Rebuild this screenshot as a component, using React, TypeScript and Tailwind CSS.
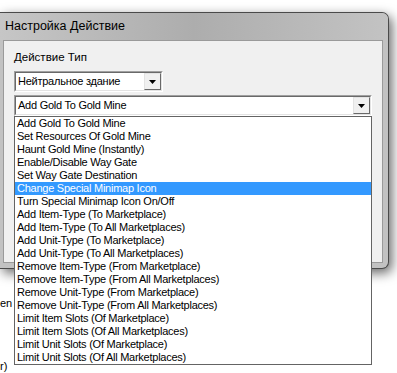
import React from "react";

const actions = [
  "Add Gold To Gold Mine",
  "Set Resources Of Gold Mine",
  "Haunt Gold Mine (Instantly)",
  "Enable/Disable Way Gate",
  "Set Way Gate Destination",
  "Change Special Minimap Icon",
  "Turn Special Minimap Icon On/Off",
  "Add Item-Type (To Marketplace)",
  "Add Item-Type (To All Marketplaces)",
  "Add Unit-Type (To Marketplace)",
  "Add Unit-Type (To All Marketplaces)",
  "Remove Item-Type (From Marketplace)",
  "Remove Item-Type (From All Marketplaces)",
  "Remove Unit-Type (From Marketplace)",
  "Remove Unit-Type (From All Marketplaces)",
  "Limit Item Slots (Of Marketplace)",
  "Limit Item Slots (Of All Marketplaces)",
  "Limit Unit Slots (Of Marketplace)",
  "Limit Unit Slots (Of All Marketplaces)",
];

const selected = "Change Special Minimap Icon";

// classic sunken combo box with the little raised arrow button
const Combo = ({ value, width }: { value: string; width: string }) => (
  <div
    className={`${width} h-[21px] border-t border-l border-[#a0a0a0] border-b border-r border-b-white border-r-white`}
  >
    <div className="flex h-full items-center border-t border-l border-[#696969] border-b border-r border-b-[#e3e3e3] border-r-[#e3e3e3] bg-white">
      <span className="flex-1 truncate pl-[2px] text-[11px] leading-[13px] tracking-[-0.25px] text-black">
        {value}
      </span>
      <div className="flex h-[17px] w-[17px] items-center justify-center border-t border-l border-[#e3e3e3] border-b border-r border-b-[#696969] border-r-[#696969] bg-[#f0f0f0]">
        <svg width="7" height="4" viewBox="0 0 7 4">
          <path d="M0 0h7L3.5 4z" fill="#000" />
        </svg>
      </div>
    </div>
  </div>
);

export default function App() {
  return (
    <div
      className="relative h-[373px] w-[397px] overflow-hidden bg-white"
      style={{ fontFamily: '"Liberation Sans", Arial, sans-serif' }}
    >
      <div className="pt-[12px]">
        {/* dialog window */}
        <div className="h-[257px] w-[389px] rounded-tr-[7px] rounded-br-[7px] border-t border-r border-b border-[#4a4a4a] bg-[#c2c2c2] shadow-[3px_4px_12px_rgba(0,0,0,0.6)]">
          <div className="flex h-[27px] items-center rounded-tr-[6px] bg-gradient-to-r from-[#c6c6c6] via-[#adadad] to-[#c3c3c3] pl-[5px] text-[12.5px] text-black">
            Настройка Действие
          </div>
          <div className="ml-[3px] mr-[5px] h-[223px] border border-[#9a9a9a] bg-[#f0f0f0] pl-[10px] pt-[10px]">
            <div className="text-[11.5px] leading-[13px] text-black">
              Действие Тип
            </div>
            <div className="mt-[7px]">
              <Combo value="Нейтральное здание" width="w-[149px]" />
            </div>
            <div className="relative mt-[3px] w-[358px]">
              <Combo value="Add Gold To Gold Mine" width="w-[358px]" />
              {/* open drop-down list */}
              <div className="absolute left-0 top-full z-10 w-[358px] border border-[#646464] bg-white">
                {actions.map((a) => (
                  <div
                    key={a}
                    className={`h-[13px] whitespace-nowrap pl-[2px] text-[11px] leading-[13px] tracking-[-0.25px] ${
                      a === selected
                        ? "bg-[#3399ff] text-white"
                        : "text-black"
                    }`}
                  >
                    {a}
                  </div>
                ))}
              </div>
            </div>
          </div>
        </div>
      </div>
      {/* bits of the window behind */}
      <div className="mt-[28px] text-[11px] leading-[13px] text-black">en</div>
      <div className="mt-[50px] text-[11px] leading-[13px] text-black">r)</div>
    </div>
  );
}
